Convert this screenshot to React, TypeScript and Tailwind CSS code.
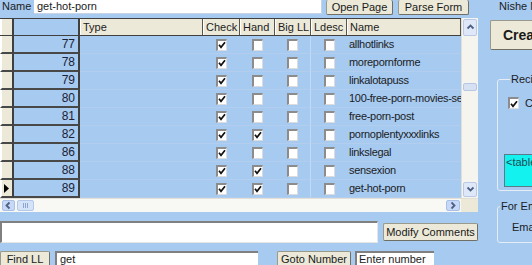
import React from 'react';

const rows = [
  { n: 77, check: true, hand: false, name: 'allhotlinks' },
  { n: 78, check: true, hand: false, name: 'morepornforme' },
  { n: 79, check: true, hand: false, name: 'linkalotapuss' },
  { n: 80, check: true, hand: false, name: '100-free-porn-movies-search' },
  { n: 81, check: true, hand: false, name: 'free-porn-post' },
  { n: 82, check: true, hand: true, name: 'pornoplentyxxxlinks' },
  { n: 86, check: true, hand: false, name: 'linkslegal' },
  { n: 88, check: true, hand: true, name: 'sensexion' },
  { n: 89, check: true, hand: true, name: 'get-hot-porn', current: true },
];

const cols = 'grid grid-cols-[14px_66px_123px_37px_35px_36px_36px_114px]';

function Box({ on }: { on?: boolean }) {
  return (
    <span className="flex items-center justify-center w-[11px] h-[12px] bg-white border-l-2 border-t-2 border-l-[#8c8c8c] border-t-[#8c8c8c] border-r border-b border-r-[#dcdcdc] border-b-[#dcdcdc]">
      {on && (
        <svg width="8" height="8" viewBox="0 0 8 8">
          <path d="M1 3.8 L3 6.3 L7 1.2" fill="none" stroke="#111" strokeWidth="1.7" />
        </svg>
      )}
    </span>
  );
}

function Btn({ children, className = '' }: { children: React.ReactNode; className?: string }) {
  return (
    <div
      className={`flex items-center justify-center bg-[#ece9d8] border border-[#9a9a8c] border-r-[#6f6f66] border-b-[#6f6f66] rounded-[2px] text-[11px] text-[#1a1a1a] ${className}`}
    >
      {children}
    </div>
  );
}

function Chevron({ dir }: { dir: 'up' | 'down' | 'left' | 'right' }) {
  const d = {
    up: 'M1.5 5.5 L4.5 2.5 L7.5 5.5',
    down: 'M1.5 2.5 L4.5 5.5 L7.5 2.5',
    left: 'M5.5 1.5 L2.5 4.5 L5.5 7.5',
    right: 'M2.5 1.5 L5.5 4.5 L2.5 7.5',
  }[dir];
  return (
    <svg width="9" height="9" viewBox="0 0 9 9">
      <path d={d} fill="none" stroke="#4d6185" strokeWidth="1.8" />
    </svg>
  );
}

export default function App() {
  return (
    <div className="w-[532px] h-[265px] overflow-hidden bg-[#a6caf0] flex font-['Liberation_Sans',Arial,sans-serif] text-[#1c1c24] text-[11px] leading-none">
      {/* Left side: form + datasheet */}
      <div className="w-[480px] shrink-0 flex flex-col">
        {/* Name row */}
        <div className="h-[20px] flex items-start">
          <span className="w-[34px] pl-[2px] pt-[1px]">Name</span>
          <div className="w-[288px] h-[14px] bg-white border-b border-r border-[#c8d4e4] pl-[3px] pt-[1px]">get-hot-porn</div>
          <Btn className="ml-[4px] w-[67px] h-[15px] border-t-0">Open Page</Btn>
          <Btn className="ml-[5px] w-[71px] h-[15px] border-t-0">Parse Form</Btn>
        </div>

        {/* Datasheet */}
        <div className="w-[478px] h-[194px] flex flex-col">
          <div className="flex h-[180px]">
            <div className="w-[461px] flex flex-col">
              <div className={`${cols} h-[18px] border-t border-b border-[#404040]`}>
                <div className="bg-[#ece9d8] border-l-2 border-l-white border-r-2 border-r-[#404040]" />
                <div className="bg-[#a6caf0] border-r-2 border-r-[#404040]" />
                {['Type', 'Check', 'Hand', 'Big LL', 'Ldesc', 'Name'].map(h => (
                  <div key={h} className="bg-[#ece9d8] border-r border-r-[#55554c] border-l border-l-white pl-[2px] flex items-center">
                    {h}
                  </div>
                ))}
              </div>
              {rows.map(r => (
                <div key={r.n} className={`${cols} h-[18px]`}>
                  <div className="bg-[#ece9d8] border-l-2 border-l-white border-r-2 border-r-[#404040] border-b-2 border-b-[#484848] flex items-center pl-[2px]">
                    {r.current && (
                      <svg width="6" height="9" viewBox="0 0 6 9">
                        <path d="M0 0 L5 4.5 L0 9 Z" fill="#000" />
                      </svg>
                    )}
                  </div>
                  <div className="border-r-2 border-r-[#404040] border-b-2 border-b-[#484848] flex items-center justify-end pr-[3px] text-[12px] text-[#1d2235]">
                    {r.n}
                  </div>
                  <div className="border-b border-b-[#b3cdee]" />
                  <div className="border-b border-b-[#b3cdee] flex items-center justify-center">
                    <Box on={r.check} />
                  </div>
                  <div className="border-b border-b-[#b3cdee] flex items-center justify-center">
                    <Box on={r.hand} />
                  </div>
                  <div className="border-b border-b-[#b3cdee] border-r border-r-[#c4d9f4] flex items-center justify-center">
                    <Box />
                  </div>
                  <div className="border-b border-b-[#b3cdee] flex items-center justify-center">
                    <Box />
                  </div>
                  <div className="border-b border-b-[#b3cdee] flex items-center pl-[2px] overflow-hidden whitespace-nowrap tracking-[-0.3px]">
                    {r.name}
                  </div>
                </div>
              ))}
            </div>
            {/* vertical scrollbar */}
            <div className="w-[17px] flex flex-col bg-[#f5f4ef] border-l border-[#e2e0d6]">
              <div className="h-[17px] m-[1px] rounded-[2px] bg-[#dfe8f8] border border-[#b9c9e6] flex items-center justify-center">
                <Chevron dir="up" />
              </div>
              <div className="h-[46px]" />
              <div className="h-[8px] mx-[1px] rounded-[2px] bg-[#d6e1f4] border border-[#b7c7e3]" />
              <div className="flex-1" />
              <div className="h-[15px] m-[1px] rounded-[2px] bg-[#dfe8f8] border border-[#b9c9e6] flex items-center justify-center">
                <Chevron dir="down" />
              </div>
            </div>
          </div>
          {/* horizontal scrollbar */}
          <div className="h-[14px] flex bg-[#f8f8f4] border-t border-[#e2e0d6]">
            <div className="w-[13px] my-[1px] ml-[2px] rounded-[2px] bg-[#c7d9f6] border border-[#a9c0e6] flex items-center justify-center">
              <Chevron dir="left" />
            </div>
            <div className="w-[17px] my-[1px] ml-[2px] rounded-[2px] bg-[#d5e3f8] border border-[#b4c8ea] flex items-center justify-center gap-[1px]">
              <span className="w-[1px] h-[5px] bg-[#8da6d0]" />
              <span className="w-[1px] h-[5px] bg-[#8da6d0]" />
              <span className="w-[1px] h-[5px] bg-[#8da6d0]" />
            </div>
            <div className="flex-1" />
            <div className="w-[14px] my-[1px] mr-[1px] rounded-[2px] bg-[#c7d9f6] border border-[#a9c0e6] flex items-center justify-center">
              <Chevron dir="right" />
            </div>
            <div className="w-[17px] bg-[#ece9d8]" />
          </div>
        </div>

        {/* Comments */}
        <div className="mt-[9px] h-[22px] flex items-center">
          <div className="w-[378px] h-[22px] bg-white border-t-2 border-l-2 border-[#808080] border-r border-b border-r-[#e6e6e6] border-b-[#e6e6e6]" />
          <Btn className="ml-[5px] w-[95px] h-[18px]">Modify Comments</Btn>
        </div>

        {/* Bottom row */}
        <div className="mt-[8px] h-[14px] flex items-start">
          <Btn className="w-[50px] h-[16px]">Find LL</Btn>
          <div className="ml-[5px] w-[203px] h-[14px] bg-white border-t-2 border-l-2 border-[#808080] pl-[3px] pt-[1px]">get</div>
          <Btn className="ml-[19px] w-[74px] h-[16px]">Goto Number</Btn>
          <div className="ml-[4px] w-[79px] h-[14px] bg-white border-t-2 border-l-2 border-[#808080] pl-[2px] pt-[1px]">Enter number</div>
        </div>
      </div>

      {/* Right side */}
      <div className="ml-[10px] w-[42px] shrink-0 overflow-hidden flex flex-col">
        <div className="h-[20px] pl-[9px] pt-[1px] whitespace-nowrap">Nishe Name</div>
        <Btn className="w-[70px] h-[30px] justify-start pl-[12px] text-[14px] font-bold">Create</Btn>
        <fieldset className="mt-[24px] ml-[7px] w-[80px] h-[117px] border border-[#e6ecf4] rounded-[3px] pl-[10px]">
          <legend className="ml-[2px] px-[1px] whitespace-nowrap">Recipients</legend>
          <div className="mt-[12px] flex items-center gap-[6px]">
            <Box on />
            <span>Check</span>
          </div>
          <div className="mt-[45px] -ml-[4px] h-[33px] bg-[#14f2f0] border border-[#5a7a8a] pl-[1px] pt-[2px] text-[#1d4a52] whitespace-nowrap">
            &lt;table
          </div>
        </fieldset>
        <fieldset className="mt-[10px] ml-[7px] w-[80px] h-[42px] border border-[#e6ecf4] rounded-[3px] pl-[14px]">
          <legend className="-ml-[12px] pl-[1px] whitespace-nowrap">For Email</legend>
          <div className="mt-[10px] whitespace-nowrap">Email</div>
        </fieldset>
      </div>
    </div>
  );
}
